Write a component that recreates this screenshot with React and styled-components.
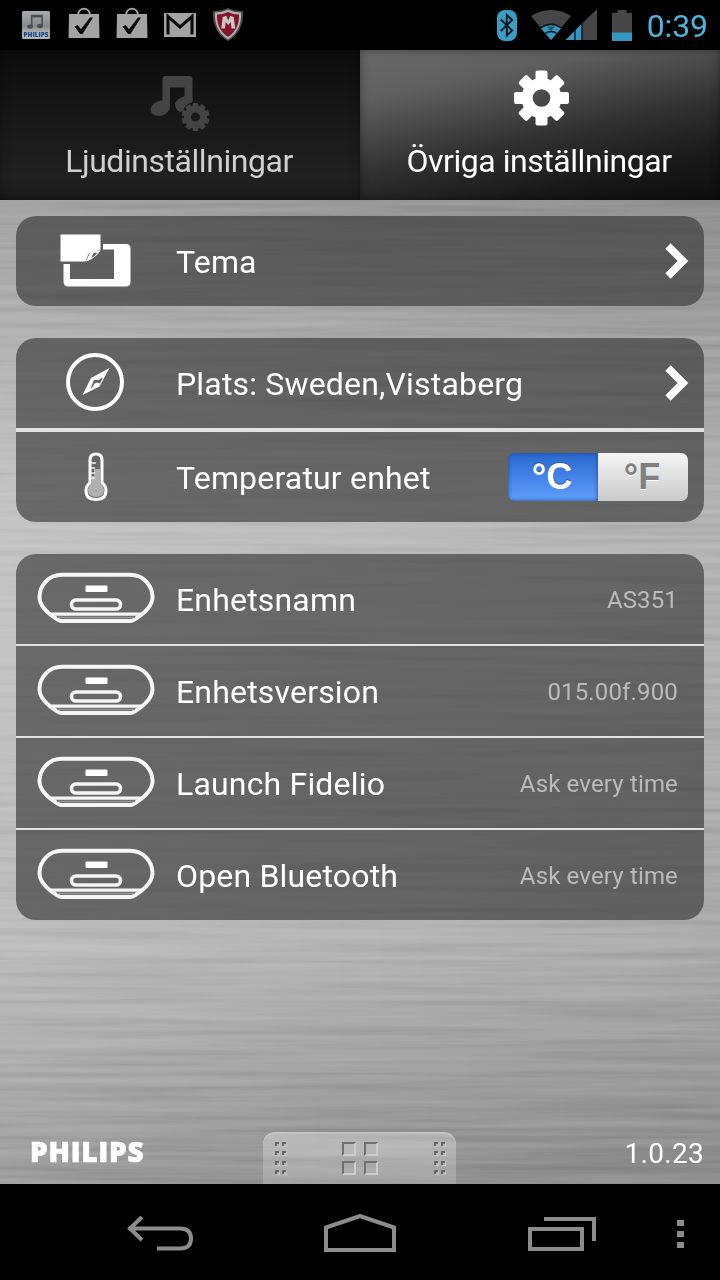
import React, { useState } from "react";

import styled, { createGlobalStyle } from "styled-components";

const deviceRows = [
  { label: "Enhetsnamn", value: "AS351" },
  { label: "Enhetsversion", value: "015.00f.900" },
  { label: "Launch Fidelio", value: "Ask every time" },
  { label: "Open Bluetooth", value: "Ask every time" },
];

const PhilipsAppIcon = () => (
  <svg width="28" height="28" viewBox="0 0 28 28">
    <defs>
      <linearGradient id="appTile" x1="0" y1="0" x2="0" y2="1">
        <stop offset="0" stopColor="#a9adaf" />
        <stop offset=".55" stopColor="#86898b" />
        <stop offset=".7" stopColor="#a6a9ab" />
        <stop offset="1" stopColor="#b3b5b7" />
      </linearGradient>
    </defs>
    <rect width="28" height="28" rx="1.5" fill="url(#appTile)" />
    <g fill="#4c4d4f">
      <ellipse cx="8.1" cy="15.6" rx="2.9" ry="2.2" />
      <ellipse cx="18" cy="15" rx="2.9" ry="2.2" />
      <path d="M8.900 3.800h12V15h-1.600V6.400h-8.800v9.200H8.900z" />
    </g>
    <text
      x="14"
      y="25.5"
      textAnchor="middle"
      textLength="25"
      lengthAdjust="spacingAndGlyphs"
      fontFamily="Open Sans, sans-serif"
      fontSize="6.8"
      fontWeight="800"
      fill="#1b4a8c"
    >
      PHILIPS
    </text>
  </svg>
);

const BagIcon = () => (
  <svg width="32" height="32" viewBox="0 0 32 32">
    <path d="M10 8.500C10 -.5 22 -.5 22 8.500" fill="none" stroke="#a3a3a3" strokeWidth="2" />
    <path d="M1 7h30l.5 24H.5z" fill="#a3a3a3" />
    <path d="M6.500 19.500l3.200-1.500 3.200 4.300L22 10.500h3L14.500 27h-2.500z" fill="#050505" />
  </svg>
);

const MailIcon = () => (
  <svg width="32" height="24" viewBox="0 0 32 24">
    <path d="M0 0h32v24H0z" fill="#a3a3a3" />
    <path d="M4 21.500V3.500L16 14 28 3.500v18" fill="none" stroke="#080808" strokeWidth="3" />
  </svg>
);

const ShieldIcon = () => (
  <svg width="32" height="34" viewBox="0 0 32 34">
    <path d="M1 3Q10 3 16 0q6 3 15 3 1 21-15 30Q0 24 1 3z" fill="#4a4c4c" />
    <path d="M3 4.500Q10 4.500 16 1.800q6 2.700 13 2.700 1 18-13 27Q2 22.500 3 4.500z" fill="#b0b2b2" />
    <path d="M5 6.500Q11 6.500 16 4q5 2.500 11 2.500Q27.500 21.500 16 29 4.500 21.500 5 6.500z" fill="#86142a" />
    <path d="M9.300 20.500l1.400-11.500 3.500-1.200 2 4.800 2-4.800 3.500 1.200 1.500 11.500h-3.700l-.8-6.500-2.500 3-2.500-3-.8 6.500z" fill="#c9c9c9" />
  </svg>
);

const BluetoothIcon = () => (
  <svg width="20" height="31" viewBox="0 0 20 31">
    <rect x="0" y="0" width="20" height="31" rx="8" fill="#3a9dc4" />
    <path d="M3.800 9.500l11.400 11-5.400 5V5l5.400 5-11.400 11" fill="none" stroke="#061820" strokeWidth="1.900" />
  </svg>
);

const SignalIcon = () => (
  <svg width="66" height="32" viewBox="0 0 66 32">
    <path d="M0 7Q9 1 20 1t20 6L20 31z" fill="#464646" />
    <path d="M9.500 19Q20 11.500 30.500 19L20 31z" fill="#3597bf" />
    <path d="M9.500 19Q20 11.500 30.500 19" fill="none" stroke="#05141b" strokeWidth="1.300" />
    <path d="M14 24.500q6-4 12 0" fill="none" stroke="#05141b" strokeWidth="1.300" />
    <path d="M16 17.500h8l-4 5z" fill="#24566b" />
    <path d="M66 0v31H34z" fill="#464646" />
    <path d="M51 14.500V31H35z" fill="#3597bf" />
    <path d="M44 20v11M51 13v18" stroke="#05141b" strokeWidth="1.400" />
  </svg>
);

const BatteryIcon = () => (
  <svg width="20" height="31" viewBox="0 0 20 31">
    <path d="M0 3h5.500V0h9v3H20v28H0z" fill="#464646" />
    <path d="M0 22.500h20V31H0z" fill="#3597bf" />
  </svg>
);

// Round toothed wheel shared by both tabs
const Cog = ({ teeth, radius, inner, hole, tooth }) => (
  <g>
    {Array.from({ length: teeth }, (_, i) => (
      <rect
        key={i}
        x={-tooth / 2}
        y={-radius}
        width={tooth}
        height={radius - hole - 1}
        rx={tooth / 6}
        transform={`rotate(${(360 / teeth) * i})`}
        fill="currentColor"
      />
    ))}
    <circle r={(inner + hole) / 2} fill="none" stroke="currentColor" strokeWidth={inner - hole} />
  </g>
);

const SoundIcon = () => (
  <svg width="64" height="60" viewBox="0 0 64 60" color="#444">
    <path
      d="M14.500 4q0-3 3-3h24q3 0 3 3v23q-5 1.500-8 5-1 5-4.500 5-5-3-5-8 1.500-5 9.500-8v-8.500H22v19q-1 9-11.500 9.500-8-1-8-7 1-6.500 12-9z"
      fill="currentColor"
    />
    <g transform="translate(47.500 42)">
      <circle r="13.500" fill="#191919" />
      <Cog teeth={10} radius={14} inner={11.500} hole={4.500} tooth={5.500} />
    </g>
  </svg>
);

const SettingsIcon = () => (
  <svg width="60" height="60" viewBox="-31.500 -30 60 60" color="#fff">
    <Cog teeth={8} radius={27.500} inner={20} hole={8.800} tooth={12} />
  </svg>
);

const ThemeIcon = () => (
  <svg width="72" height="54" viewBox="0 -1 72 54" fill="#fff">
    <path d="M.5.500h40v15.500q-9 0-12 4l-3 7.500H.5z" />
    <path d="M26 27.500l4-9q4-3.500 10.500-2-5 8-14.500 11zm5.500-3.500q4-2 5.500-5-3-.8-4 1z" fillRule="evenodd" />
    <path d="M43 10h23q4.500 0 4.500 4.500v33q0 5-4.500 5H8.500q-5 0-5-5V30H10v15h44V15.500H43z" />
  </svg>
);

const CompassIcon = () => (
  <svg width="60" height="60" viewBox="0 0 60 60">
    <circle cx="29" cy="30" r="27" fill="none" stroke="#fff" strokeWidth="4" />
    <path
      d="M43.500 16L33.500 34.500 16.500 43 25 26zM28 28l-3.500 8.500 2.500-2 1.500-3 3-1 2.500 1 3-6-4.500 2.500z"
      fill="#fff"
      fillRule="evenodd"
    />
  </svg>
);

const ThermometerIcon = () => (
  <svg width="24" height="50" viewBox="0 -1 24 50">
    <path
      d="M6 31V8q0-6 6-6t6 6v23q4 3 4 7.500 0 9-10 9t-10-9Q2 34 6 31z"
      fill="none"
      stroke="#fff"
      strokeWidth="3"
    />
    <path d="M10 17h6v15q4 2 4 6 0 7-8 7t-8-7q0-4 4-6V24h2z" fill="#b0b0b0" />
    <path d="M7 11h5M7 16h4M7 21h4M7 26h4" stroke="#eee" strokeWidth="1.600" />
  </svg>
);

const DockIcon = () => (
  <svg width="118" height="52" viewBox="0 0 118 52" fill="none" stroke="#f6f6f6">
    <path
      d="M25 2.800h68C107 2.800 115.500 14 115.500 25c0 10-9 17-18 22.500q-2 1.500-4 1.500h-69q-2 0-4-1.500C11.500 42 2.500 35 2.500 25 2.500 14 11 2.800 25 2.800z"
      strokeWidth="4"
    />
    <path d="M12 42.200h94" strokeWidth="3.200" />
    <path d="M20 45.500h78" strokeWidth="1.600" stroke="#999" />
    <rect x="34.500" y="28" width="49" height="9" rx="4.500" strokeWidth="3.600" />
    <rect x="48.500" y="13.500" width="22" height="6.500" rx="1" fill="#fff" stroke="none" />
  </svg>
);

const Chevron = () => (
  <svg width="26" height="36" viewBox="0 0 26 36">
    <path d="M4 3L19 18 4 33" fill="none" stroke="#fff" strokeWidth="7.500" />
  </svg>
);

// Brushed aluminium surface
const Metal = () => (
  <MetalSvg width="720" height="984">
    <filter id="brushed" x="0" y="0" width="100%" height="100%" colorInterpolationFilters="sRGB">
      <feTurbulence type="fractalNoise" baseFrequency="0.004 0.14" numOctaves="3" seed="7" />
      <feColorMatrix values="1 0 0 0 0  1 0 0 0 0  1 0 0 0 0  0 0 0 0 1" />
    </filter>
    <rect width="720" height="984" filter="url(#brushed)" />
  </MetalSvg>
);

const GripDots = () => (
  <Grip>
    {Array.from({ length: 8 }, (_, i) => (
      <i key={i} />
    ))}
  </Grip>
);

const DrawerHandle = () => (
  <Handle>
    <GripDots />
    <Tiles>
      <i />
      <i />
      <i />
      <i />
    </Tiles>
    <GripDots />
  </Handle>
);

const App = () => {
  const [unit, setUnit] = useState("C");

  return (
    <Screen>
      <GlobalStyle />
      <StatusBar>
        <Notifications>
          <PhilipsAppIcon />
          <BagIcon />
          <BagIcon />
          <MailIcon />
          <ShieldIcon />
        </Notifications>
        <SystemIcons>
          <BluetoothIcon />
          <SignalIcon />
          <BatteryIcon />
          <Clock>0:39</Clock>
        </SystemIcons>
      </StatusBar>

      <Tabs>
        <Tab>
          <TabIcon $drop={13}>
            <SoundIcon />
          </TabIcon>
          <TabLabel>Ljudinställningar</TabLabel>
        </Tab>
        <Tab $active>
          <TabIcon>
            <SettingsIcon />
          </TabIcon>
          <TabLabel>Övriga inställningar</TabLabel>
        </Tab>
      </Tabs>

      <Content>
        <Metal />
        <Card>
          <Row>
            <RowIcon>
              <ThemeIcon />
            </RowIcon>
            <Label>Tema</Label>
            <Chevron />
          </Row>
        </Card>

        <Card $divider={4}>
          <Row>
            <RowIcon>
              <CompassIcon />
            </RowIcon>
            <Label>Plats: Sweden,Vistaberg</Label>
            <Chevron />
          </Row>
          <Row>
            <RowIcon>
              <ThermometerIcon />
            </RowIcon>
            <Label>Temperatur enhet</Label>
            <UnitSwitch>
              <Unit $on={unit === "C"} onClick={() => setUnit("C")}>
                °C
              </Unit>
              <Unit $on={unit === "F"} onClick={() => setUnit("F")}>
                °F
              </Unit>
            </UnitSwitch>
          </Row>
        </Card>

        <Card $divider={2}>
          {deviceRows.map((row) => (
            <Row key={row.label}>
              <RowIcon>
                <DockIcon />
              </RowIcon>
              <Label>{row.label}</Label>
              <Value>{row.value}</Value>
            </Row>
          ))}
        </Card>

        <Footer>
          <Brand>PHILIPS</Brand>
          <DrawerHandle />
          <Version>1.0.23</Version>
        </Footer>
      </Content>

      <NavBar>
        <svg width="66" height="36" viewBox="0 0 66 36" fill="none" stroke="#8c8c8c" strokeWidth="4">
          <path d="M15 1L3 12.500 15 24M4 12.500h49q11 0 11 10t-11 10H30" />
        </svg>
        <svg width="72" height="40" viewBox="0 1 72 40" fill="none" stroke="#8c8c8c" strokeWidth="4">
          <path d="M2 37V14.500L36 3l34 11.500V37z" />
        </svg>
        <svg width="68" height="34" viewBox="0 0 68 34" fill="none" stroke="#8c8c8c" strokeWidth="4">
          <path d="M2 12h52v20H2zM16 2h50v22" />
        </svg>
        <svg width="7" height="28" viewBox="0 0 7 28" fill="#8c8c8c">
          <path d="M0 0h7v6H0zM0 11h7v6H0zM0 22h7v6H0z" />
        </svg>
      </NavBar>
    </Screen>
  );
};

const GlobalStyle = createGlobalStyle`
  * {
    box-sizing: border-box;
  }
  body {
    margin: 0;
    background: #000;
    font-family: Roboto, sans-serif;
  }
  svg {
    display: block;
    flex-shrink: 0;
  }
`;

const Screen = styled.div`
  display: flex;
  flex-direction: column;
  width: 720px;
  height: 1280px;
  overflow: hidden;
  background: #000;
`;

const StatusBar = styled.header`
  display: flex;
  justify-content: space-between;
  align-items: center;
  height: 50px;
  padding: 0 12px 0 22px;
`;

const Notifications = styled.div`
  display: flex;
  align-items: center;
  gap: 16px;
  svg:first-child {
    margin-right: 2px;
  }
  svg:nth-child(2),
  svg:nth-child(3) {
    margin-top: -4px;
  }
`;

const SystemIcons = styled.div`
  display: flex;
  align-items: center;
  gap: 15px;
  svg:first-child {
    margin-right: -1px;
  }
`;

const Clock = styled.span`
  color: #4eb4dc;
  font-size: 32px;
  letter-spacing: -0.1px;
  line-height: 48px;
  padding-top: 2px;
`;

const Tabs = styled.nav`
  display: grid;
  grid-template-columns: 1fr 1fr;
  height: 150px;
`;

const Tab = styled.div`
  display: flex;
  flex-direction: column;
  align-items: center;
  color: ${({ $active }) => ($active ? "#fff" : "#cfcfcf")};
  background: ${({ $active }) =>
    $active
      ? "linear-gradient(168deg, #686868 0%, #606060 22%, #303030 56%, #181818 80%, #0e0e0e 100%)"
      : "linear-gradient(#0c0c0c, #151515 35%, #202020 85%, #191919)"};
  box-shadow: inset 0 0 8px rgba(0, 0, 0, 0.4);
`;

const TabIcon = styled.div`
  display: flex;
  align-items: center;
  justify-content: center;
  height: 76px;
  margin: 10px 0 6px;
  padding-top: ${({ $drop }) => $drop || 0}px;
`;

const TabLabel = styled.span`
  font-size: 32px;
  line-height: 38px;
  letter-spacing: -0.45px;
  white-space: nowrap;
  padding-right: 2px;
`;

const Content = styled.main`
  position: relative;
  display: flex;
  flex-direction: column;
  gap: 32px;
  height: 984px;
  padding: 16px 16px 0;
  background: linear-gradient(90deg, rgba(255, 255, 255, 0.12), transparent 50%, rgba(0, 0, 0, 0.05)),
    linear-gradient(
      #979797 0%,
      #a6a6a6 12%,
      #bbb 30%,
      #bcbcbc 45%,
      #b4b4b4 65%,
      #b4b4b4 76%,
      #a4a4a4 87%,
      #919191 100%
    );
`;

const MetalSvg = styled.svg`
  position: absolute;
  inset: 0;
  mix-blend-mode: soft-light;
  opacity: 0.32;
`;

const Row = styled.div`
  display: flex;
  align-items: center;
  height: 90px;
  padding-right: 14px;
  background: rgba(50, 50, 50, 0.62);
  background-clip: padding-box;
`;

const Card = styled.section`
  position: relative;
  border-radius: 20px;
  overflow: hidden;
  display: flex;
  flex-direction: column;
  ${Row} + ${Row} {
    border-top: ${({ $divider }) => $divider}px solid #e2e2e2;
    height: ${({ $divider }) => 90 + $divider}px;
  }
`;

const RowIcon = styled.div`
  display: flex;
  justify-content: center;
  width: 160px;
  padding-bottom: 2px;
`;

const Label = styled.span`
  flex: 1;
  color: #fff;
  font-size: 32px;
  line-height: 38px;
  letter-spacing: 0.18px;
  white-space: nowrap;
  padding-top: 2px;
`;

const Value = styled.span`
  color: #bbb;
  font-size: 24px;
  line-height: 30px;
  letter-spacing: 0.15px;
  padding: 2px 12px 0 0;
`;

const UnitSwitch = styled.div`
  display: grid;
  grid-template-columns: 1fr 1fr;
  width: 180px;
  height: 48px;
  margin-right: 2px;
  border-radius: 7px;
  overflow: hidden;
`;

const Unit = styled.button`
  border: 0;
  padding: 0 2px 0 0;
  cursor: pointer;
  font: bold 36px/46px "Liberation Sans", sans-serif;
  color: ${({ $on }) => ($on ? "#fff" : "#808080")};
  background: ${({ $on }) =>
    $on ? "linear-gradient(#2b67cf, #4483e6 50%, #609ffa)" : "linear-gradient(#f4f4f4, #dedede 55%, #c9c9c9)"};
  box-shadow: ${({ $on }) => ($on ? "inset 0 0 4px #1c469b" : "none")};
  text-shadow: ${({ $on }) => ($on ? "0 -1px 1px #2456ad" : "0 1px 0 #fff")};
`;

const Footer = styled.footer`
  position: relative;
  display: grid;
  grid-template-columns: 247px 193px 1fr;
  align-items: end;
  margin-top: auto;
`;

const Brand = styled.div`
  color: #fff;
  font: 800 28px/34px "Open Sans", sans-serif;
  letter-spacing: 0.8px;
  -webkit-text-stroke: 0.6px #fff;
  padding: 0 0 16px 14px;
`;

const Handle = styled.div`
  display: flex;
  justify-content: space-between;
  height: 52px;
  padding: 10px 11px 0 12px;
  border-radius: 12px 12px 0 0;
  background: linear-gradient(rgba(255, 255, 255, 0.32), rgba(255, 255, 255, 0.16));
  box-shadow: inset 0 2px 1px rgba(255, 255, 255, 0.2);
`;

const Grip = styled.div`
  display: grid;
  grid-template-columns: 4px 4px;
  grid-auto-rows: 4px;
  gap: 5.3px 3px;
  i {
    border: solid #666;
    border-width: 2px 0 0 2px;
    box-shadow: 1px 1px 0 #c4c4c4;
    height: 4px;
  }
`;

const Tiles = styled.div`
  display: grid;
  grid-template-columns: 14px 14px;
  grid-auto-rows: 14px;
  gap: 5px 8px;
  i {
    border: 2px solid;
    border-color: #707070 #ccc #ccc #707070;
  }
`;

const Version = styled.div`
  color: #fff;
  font-size: 28px;
  line-height: 34px;
  letter-spacing: 0.3px;
  text-align: right;
  padding-bottom: 13px;
`;

const NavBar = styled.nav`
  display: grid;
  grid-template-columns: 197px 204px 149px 1fr;
  align-items: center;
  height: 96px;
  padding: 4px 0 0 127px;
`;

export default App;
